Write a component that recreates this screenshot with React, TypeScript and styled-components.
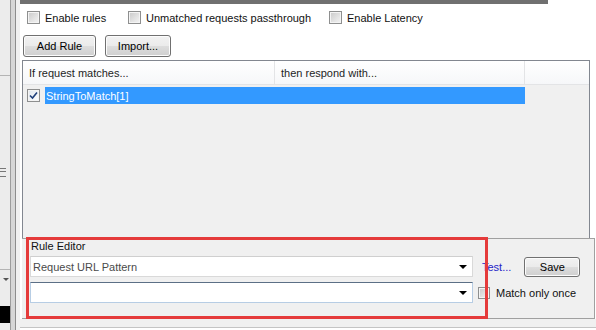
import React from "react";
import styled, { createGlobalStyle } from "styled-components";

const GlobalStyle = createGlobalStyle`
  html, body {
    margin: 0;
    padding: 0;
    background: #f0f0f0;
    overflow: hidden;
  }
  body {
    font-family: "Liberation Sans", Arial, sans-serif;
    font-size: 11px;
    color: #111;
  }
`;

const Window = styled.div`
  display: flex;
  width: 596px;
  height: 330px;
  background: #f0f0f0;
`;

const LeftPane = styled.div`
  width: 10px;
  flex: none;
  display: flex;
  flex-direction: column;
  background: #ececec;
  border-right: 1px solid #9c9c9c;
`;

const PaneLine = styled.div<{ top: number }>`
  margin-top: ${({ top }) => top}px;
  height: 1px;
  background: #b4b4b4;
`;

const Grip = styled.div`
  margin-top: 92px;
  width: 6px;
  height: 7px;
  border-top: 1px solid #777;
  border-bottom: 1px solid #777;
  position: relative;
  &::after {
    content: "";
    position: absolute;
    left: 0;
    right: 0;
    top: 2px;
    height: 1px;
    background: #777;
  }
`;

const PaneArrow = styled.div`
  margin: 8px 0 0 3px;
  width: 0;
  height: 0;
  border-left: 3px solid transparent;
  border-right: 3px solid transparent;
  border-top: 3px solid #555;
`;

const BlackBox = styled.div`
  margin-top: 25px;
  height: 17px;
  background: #000;
`;

const Splitter = styled.div`
  width: 4px;
  flex: none;
  background: #d6d6d6;
  border-right: 1px solid #8c8c8c;
`;

const SplitGap = styled.div`
  width: 4px;
  flex: none;
  background: #f0f0f0;
`;

const Main = styled.div`
  flex: 1;
  display: flex;
  flex-direction: column;
  background: #fff;
  min-width: 0;
`;

const TopBar = styled.div`
  width: 528px;
  height: 4px;
  background: #707070;
  flex: none;
`;

const OptionsRow = styled.div`
  display: flex;
  align-items: center;
  padding: 7px 0 0 7px;
  height: 13px;
`;

const Option = styled.label<{ width?: number }>`
  display: flex;
  align-items: center;
  gap: 5px;
  width: ${({ width }) => (width ? `${width}px` : "auto")};
  white-space: nowrap;
`;

const Check = styled.span<{ checked?: boolean; size?: number }>`
  width: ${({ size }) => size ?? 13}px;
  height: ${({ size }) => size ?? 13}px;
  box-sizing: border-box;
  flex: none;
  border: 1px solid #8e8f8f;
  background: ${({ checked }) =>
    checked
      ? "linear-gradient(135deg, #dfe6ee, #ffffff)"
      : "linear-gradient(135deg, #c9c9c9 0%, #e4e4e4 60%, #f4f4f4 100%)"};
  box-shadow: inset 0 0 0 1px #f4f4f4;
  display: flex;
  align-items: center;
  justify-content: center;
`;

const ButtonRow = styled.div`
  display: flex;
  gap: 9px;
  padding: 11px 0 0 3px;
`;

const Button = styled.button<{ width: number }>`
  width: ${({ width }) => width}px;
  height: 22px;
  padding: 0;
  font: inherit;
  color: #000;
  border: 1px solid #707070;
  border-radius: 3px;
  background: linear-gradient(#f2f2f2 0%, #ebebeb 48%, #dddddd 52%, #cfcfcf 100%);
  box-shadow: inset 0 0 0 1px #fcfcfc;
`;

const ListView = styled.div`
  margin: 3px 6px 0 2px;
  flex: 1;
  display: flex;
  flex-direction: column;
  border: 1px solid #828790;
  border-bottom: none;
  background: #f0f0f0;
`;

const HeaderRow = styled.div`
  display: flex;
  height: 23px;
  background: linear-gradient(#ffffff, #f6f7f9);
  border-bottom: 1px solid #e3e4e6;
`;

const HeaderCell = styled.div<{ width?: number }>`
  width: ${({ width }) => (width ? `${width}px` : "auto")};
  flex: ${({ width }) => (width ? "none" : "1")};
  box-sizing: border-box;
  padding: 0 0 0 6px;
  display: flex;
  align-items: center;
  border-right: 1px solid #e3e4e6;
  color: #1e1e1e;
  &:last-child {
    border-right: none;
  }
`;

const ItemRow = styled.div`
  display: flex;
  align-items: center;
  height: 17px;
  margin-top: 2px;
  padding-left: 4px;
`;

const Selection = styled.div`
  margin-left: 5px;
  width: 480px;
  height: 17px;
  background: #3399ff;
  color: #fff;
  display: flex;
  align-items: center;
  padding-left: 1px;
  box-sizing: border-box;
`;

const LowerPanel = styled.div`
  position: relative;
  margin: 0 1px 0 2px;
  height: 81px;
  background: #f0f0f0;
  border-top: 1px solid #a0a0a0;
  border-right: 1px solid #a0a0a0;
  border-bottom: 1px solid #a0a0a0;
  padding: 0 0 0 8px;
  box-sizing: border-box;
  flex: none;
`;

const GroupLabel = styled.div`
  height: 15px;
  line-height: 15px;
  padding-left: 1px;
`;

const EditorRow = styled.div<{ top: number }>`
  display: flex;
  align-items: center;
  margin-top: ${({ top }) => top}px;
`;

const Combo = styled.div<{ focused?: boolean }>`
  width: 443px;
  height: 21px;
  box-sizing: border-box;
  flex: none;
  display: flex;
  align-items: center;
  justify-content: space-between;
  padding: 0 3px 0 2px;
  background: #fff;
  border: 1px solid ${({ focused }) => (focused ? "#b7cde4" : "#d9d9d9")};
  border-top-color: ${({ focused }) => (focused ? "#5b6f86" : "#cfcfcf")};
  color: #4a4a4a;
`;

const DropArrow = styled.span`
  width: 0;
  height: 0;
  border-left: 4px solid transparent;
  border-right: 4px solid transparent;
  border-top: 4px solid #000;
  margin-right: 2px;
`;

const TestLink = styled.span`
  margin-left: 9px;
  color: #2424c8;
`;

const SaveButton = styled(Button)`
  margin-left: 13px;
  height: 20px;
`;

const OnceOption = styled.label`
  display: flex;
  align-items: center;
  gap: 6px;
  margin-left: 5px;
`;

const RedMark = styled.div`
  position: absolute;
  left: 4px;
  top: -2px;
  width: 462px;
  height: 82px;
  box-sizing: border-box;
  border: 3px solid #e53b3b;
  pointer-events: none;
`;

const BottomStrip = styled.div`
  height: 9px;
  flex: none;
  background: #f0f0f0;
  border-bottom: 1px solid #c4c4c4;
  box-sizing: border-box;
  margin-bottom: 2px;
`;

const CheckMark = () => (
  <svg width="9" height="9" viewBox="0 0 9 9">
    <path d="M1 4.5 L3.5 7 L8 1.5" fill="none" stroke="#1f3f7a" strokeWidth="1.6" />
  </svg>
);

export default function App() {
  return (
    <>
      <GlobalStyle />
      <Window>
        <LeftPane>
          <PaneLine top={75} />
          <Grip />
          <PaneLine top={92} />
          <PaneArrow />
          <BlackBox />
        </LeftPane>
        <Splitter />
        <SplitGap />
        <Main>
          <TopBar />
          <OptionsRow>
            <Option width={101}>
              <Check />
              Enable rules
            </Option>
            <Option width={201}>
              <Check />
              Unmatched requests passthrough
            </Option>
            <Option>
              <Check />
              Enable Latency
            </Option>
          </OptionsRow>
          <ButtonRow>
            <Button width={73}>Add Rule</Button>
            <Button width={66}>Import...</Button>
          </ButtonRow>
          <ListView>
            <HeaderRow>
              <HeaderCell width={252}>If request matches...</HeaderCell>
              <HeaderCell width={250}>then respond with...</HeaderCell>
              <HeaderCell />
            </HeaderRow>
            <ItemRow>
              <Check checked>
                <CheckMark />
              </Check>
              <Selection>StringToMatch[1]</Selection>
            </ItemRow>
          </ListView>
          <LowerPanel>
            <GroupLabel>Rule Editor</GroupLabel>
            <EditorRow top={2}>
              <Combo>
                Request URL Pattern
                <DropArrow />
              </Combo>
              <TestLink>Test...</TestLink>
              <SaveButton width={56}>Save</SaveButton>
            </EditorRow>
            <EditorRow top={5}>
              <Combo focused>
                <span />
                <DropArrow />
              </Combo>
              <OnceOption>
                <Check size={12} />
                Match only once
              </OnceOption>
            </EditorRow>
            <RedMark />
          </LowerPanel>
          <BottomStrip />
        </Main>
      </Window>
    </>
  );
}
